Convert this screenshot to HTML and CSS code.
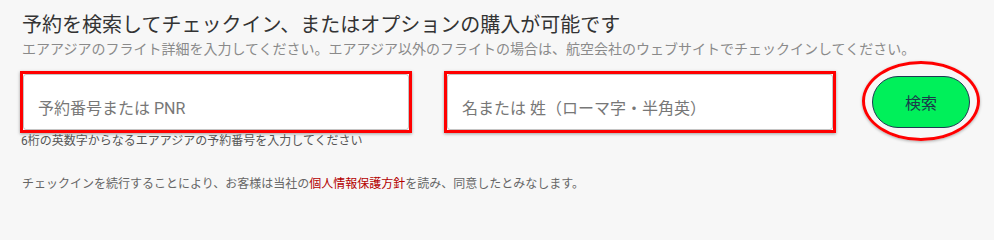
FILE: index.html
```html
<!DOCTYPE html>
<html lang="ja">
<head>
<meta charset="utf-8">
<title>チェックイン</title>
<link rel="stylesheet" href="styles.css">
</head>
<body>
<div class="panel">
  <h2 class="title">予約を検索してチェックイン、またはオプションの購入が可能です</h2>
  <p class="subtitle">エアアジアのフライト詳細を入力してください。エアアジア以外のフライトの場合は、航空会社のウェブサイトでチェックインしてください。</p>
  <div class="form-row">
    <div class="field-col">
      <div class="highlight-box">
        <input class="text-input" type="text" placeholder="予約番号または PNR">
      </div>
      <p class="hint">6桁の英数字からなるエアアジアの予約番号を入力してください</p>
    </div>
    <div class="field-col">
      <div class="highlight-box">
        <input class="text-input" type="text" placeholder="名または 姓（ローマ字・半角英）">
      </div>
    </div>
    <div class="button-wrap">
      <button class="search-btn" type="button">検索</button>
      <span class="ring"></span>
    </div>
  </div>
  <p class="consent">チェックインを続行することにより、お客様は当社の<a class="policy-link" href="#">個人情報保護方針</a>を読み、同意したとみなします。</p>
</div>
</body>
</html>
```
FILE: styles.css
```css
html, body {
  margin: 0;
  padding: 0;
  background: #f7f7f7;
}

body {
  font-family: Roboto, "Noto Sans CJK JP", sans-serif;
  color: #333;
}

.panel {
  padding: 11px 20px 0 20px;
}

.title {
  margin: 0;
  padding-left: 2px;
  font-size: 20px;
  line-height: 28px;
  font-weight: 400;
  color: #333;
}

.subtitle {
  margin: 0;
  padding-left: 2px;
  font-size: 14px;
  line-height: 20px;
  color: #8a8a8a;
}

.form-row {
  display: flex;
  align-items: flex-start;
  margin-top: 12px;
}

.field-col {
  width: 392px;
  display: flex;
  flex-direction: column;
}

.field-col + .field-col {
  margin-left: 32px;
}

.highlight-box {
  border: 3px solid #ff0000;
  box-shadow: 0 1px 3px rgba(0, 0, 0, 0.35);
  background: #fff;
}

.text-input {
  display: block;
  box-sizing: border-box;
  width: 100%;
  height: 56px;
  margin: 0;
  padding: 12px 14px 0 14px;
  border: 1px solid #c4c4c4;
  border-radius: 3px;
  background: #fff;
  font-family: Roboto, "Noto Sans CJK JP", sans-serif;
  font-size: 16px;
  color: #333;
  outline: none;
}

.text-input::placeholder {
  color: #777;
  opacity: 1;
}

.hint {
  margin: 0;
  padding-left: 1px;
  font-size: 12px;
  line-height: 16px;
  color: #555;
}

.button-wrap {
  position: relative;
  margin-left: 36px;
  margin-top: 5px;
  width: 98px;
  height: 52px;
}

.search-btn {
  display: block;
  box-sizing: border-box;
  width: 98px;
  height: 52px;
  margin: 0;
  padding: 0;
  border: 1px solid #1d3b52;
  border-radius: 26px;
  background: #00f05a;
  color: #1b3a4b;
  font-family: Roboto, "Noto Sans CJK JP", sans-serif;
  font-size: 16px;
  cursor: pointer;
}

.ring {
  position: absolute;
  left: -10px;
  top: -15px;
  width: 118px;
  height: 80px;
  box-sizing: border-box;
  border: 3px solid #ff0000;
  border-radius: 50%;
  box-shadow: 0 1px 3px rgba(0, 0, 0, 0.3);
  pointer-events: none;
}

.consent {
  margin: 27px 0 0 0;
  padding-left: 2px;
  font-size: 12px;
  line-height: 17px;
  color: #666;
}

.policy-link {
  color: #b40000;
  text-decoration: none;
}
```
